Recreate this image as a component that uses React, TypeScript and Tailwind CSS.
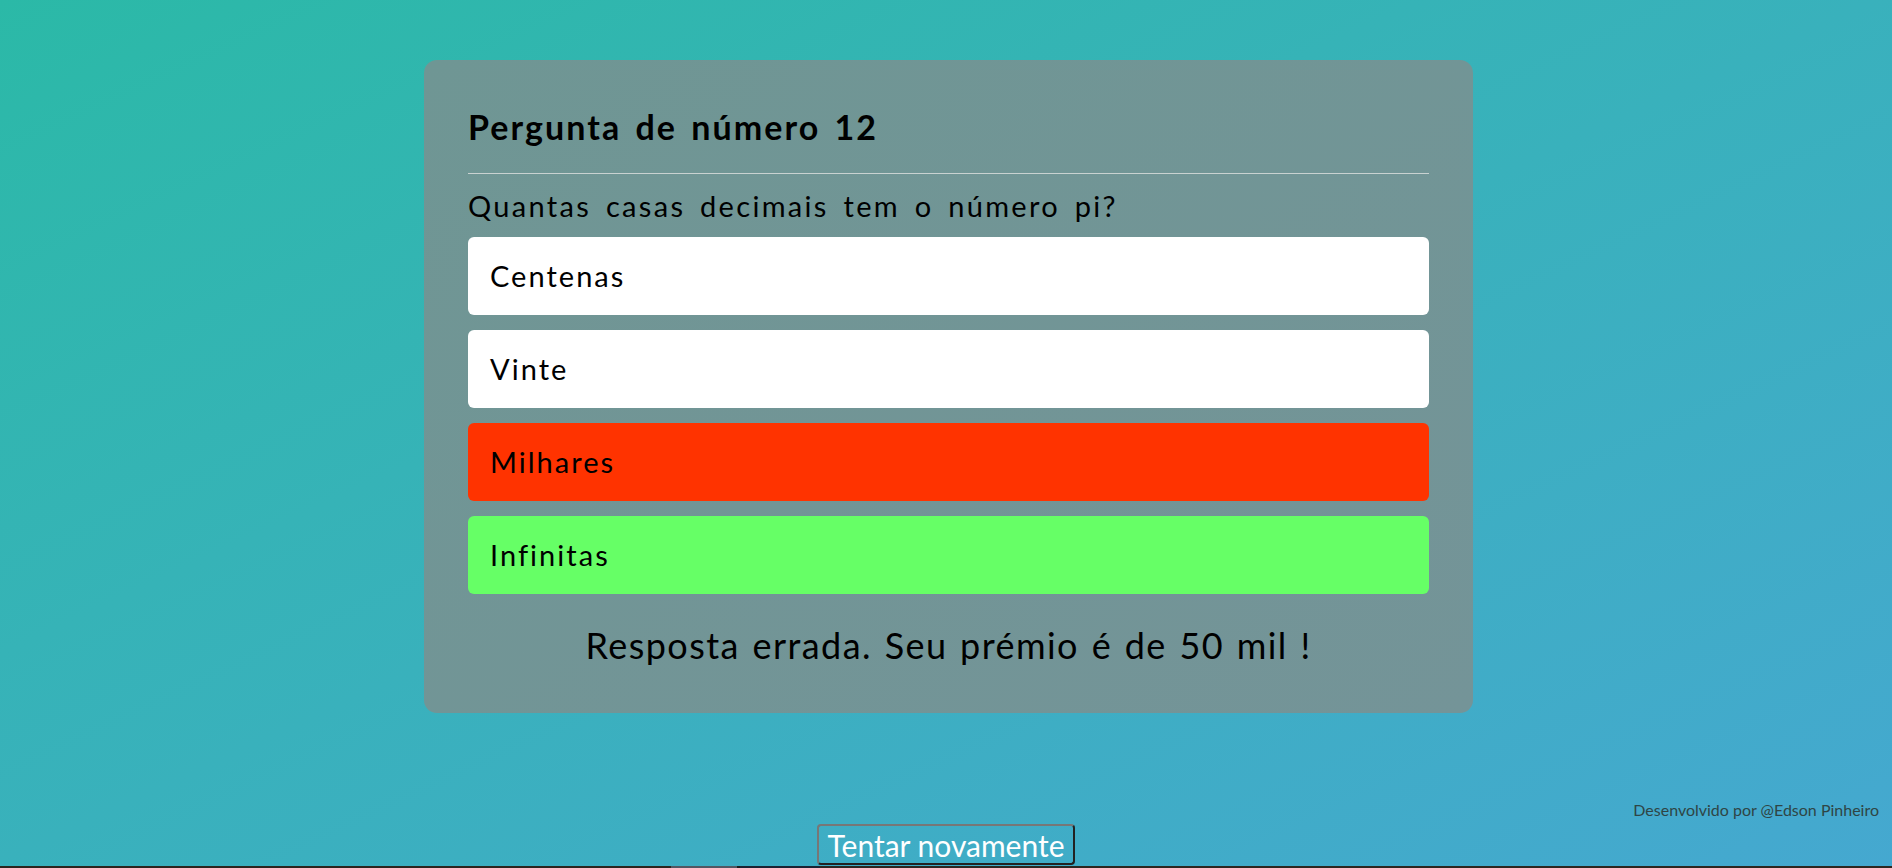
import React from "react";

const answers = [
  { text: "Centenas", color: "bg-white" },
  { text: "Vinte", color: "bg-white" },
  { text: "Milhares", color: "bg-[#ff3300]" },
  { text: "Infinitas", color: "bg-[#66ff66]" },
];

export default function App() {
  return (
    <div className="flex min-h-[868px] flex-col bg-linear-to-br from-[#2bb9a7] to-[#45a8d0] font-['Lato',sans-serif] text-black">
      <main className="mt-[60px] ml-[424px] w-[1049px] rounded-[13px] bg-linear-to-br from-[#6f9694] to-[#749498] px-[44px] pt-[47px] pb-[46px]">
        <h2 className="text-[34px] leading-[40px] font-bold tracking-[0.06em] [word-spacing:4px]">
          Pergunta de número 12
        </h2>
        <hr className="mt-[26px] border-0 border-t border-[#c9d2d1]" />
        <p className="mt-[15px] text-[29px] leading-[34px] tracking-[0.08em] [word-spacing:5px]">
          Quantas casas decimais tem o número pi?
        </p>
        <div className="mt-[14px] flex flex-col gap-[15px]">
          {answers.map((a) => (
            <div
              key={a.text}
              className={`${a.color} flex h-[78px] items-center rounded-[6px] px-[22px] text-[29px] tracking-[0.07em]`}
            >
              {a.text}
            </div>
          ))}
        </div>
        <p className="mt-[29px] text-center text-[36px] leading-[44px] tracking-[0.04em] [word-spacing:2px]">
          Resposta errada. Seu prémio é de 50 mil !
        </p>
      </main>

      <div className="flex-1" />

      <footer className="pr-[13px] text-right text-[16px] leading-[20px] text-[#2f4545]">
        Desenvolvido por @Edson Pinheiro
      </footer>

      <div className="mt-[4px] flex justify-center">
        <button className="h-[41px] w-[258px] rounded-[4px] border-2 border-t-[#777777] border-l-[#777777] border-r-[#222222] border-b-[#222222] bg-transparent text-[30px] leading-none text-white">
          Tentar novamente
        </button>
      </div>

      <div className="mt-[1px] flex h-[2px]">
        <div className="w-[671px] bg-[#2b251f]" />
        <div className="w-[66px] bg-[#515763]" />
        <div className="w-[3px] bg-[#1c1c1c]" />
        <div className="w-[80px] bg-[#1b2333]" />
        <div className="flex-1 bg-[#2c2721]" />
      </div>
    </div>
  );
}
